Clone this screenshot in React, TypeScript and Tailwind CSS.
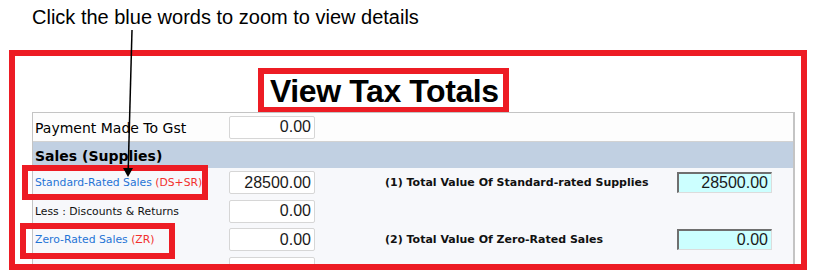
import type { ReactNode } from "react";

type SalesRow = {
  label: ReactNode;
  value: string;
  total?: { text: string; value: string };
  h: string;
};

const rows: SalesRow[] = [
  {
    label: (
      <>
        <span className="text-[#1f74d6]">Standard-Rated Sales </span>
        <span className="text-[#f2302e]">(DS+SR)</span>
      </>
    ),
    value: "28500.00",
    total: { text: "(1) Total Value Of Standard-rated Supplies", value: "28500.00" },
    h: "h-[29px]",
  },
  { label: "Less : Discounts & Returns", value: "0.00", h: "h-[28px]" },
  {
    label: (
      <>
        <span className="text-[#1f74d6]">Zero-Rated Sales </span>
        <span className="text-[#f2302e]">(ZR)</span>
      </>
    ),
    value: "0.00",
    total: { text: "(2) Total Value Of Zero-Rated Sales", value: "0.00" },
    h: "h-[29px]",
  },
  { label: "", value: "", h: "h-[28px]" },
];

function Field({ value }: { value: string }) {
  return (
    <div className="flex h-[23px] w-[86px] shrink-0 items-center justify-end rounded-[2px] border border-[#d6d6d6] bg-white pr-[3px] font-['Liberation_Sans',Arial,sans-serif] text-[16px] leading-none text-[#1a1a1a]">
      {value}
    </div>
  );
}

function TotalField({ value }: { value: string }) {
  return (
    <div className="flex h-[21px] w-[95px] shrink-0 items-center justify-end border-t-2 border-l-2 border-r border-b border-t-[#6f6f6f] border-l-[#6f6f6f] border-r-[#dcdcdc] border-b-[#dcdcdc] bg-[#ccffff] pr-[3px] font-['Liberation_Sans',Arial,sans-serif] text-[16px] leading-none text-[#1a1a1a]">
      {value}
    </div>
  );
}

export default function App() {
  return (
    <div className="relative h-[277px] w-[814px] overflow-hidden bg-white font-['DejaVu_Sans',sans-serif]">
      {/* caption */}
      <p className="pl-[32px] pt-[6px] font-['Liberation_Sans',Arial,sans-serif] text-[20px] leading-[23px] text-black">
        Click the blue words to zoom to view details
      </p>

      {/* outer red frame */}
      <div className="ml-[9px] mt-[21px] h-[220px] w-[798px] overflow-hidden border-[6px] border-[#ed1c24] bg-white">
        <div className="ml-[243px] mt-[12px] flex h-[45px] w-[251px] items-center whitespace-nowrap border-[6px] border-[#ed1c24] bg-white pl-[6px] pt-[2px] font-['Liberation_Sans',Arial,sans-serif] text-[32px] font-bold leading-[33px] tracking-[-0.4px] text-black">
          View Tax Totals
        </div>

        {/* form panel */}
        <div className="-mt-px ml-[17px] w-[763px] border-l border-t border-r-2 border-[#c4c4c4] bg-[#f7f8fb]">
          <div className="flex h-[29px] items-center border-b border-[#d2d2d2] bg-[#fdfdfd] pl-[2px]">
            <div className="w-[194px] shrink-0 pt-[2px] text-[14px] text-black">Payment Made To Gst</div>
            <Field value="0.00" />
          </div>
          <div className="flex h-[26px] items-center bg-[#c1d0e2] pl-[2px] pt-[3px] text-[14px] font-bold text-black">
            Sales (Supplies)
          </div>
          {rows.map((r, i) => (
            <div key={i} className={`flex items-center pl-[2px] ${r.h}`}>
              <div className="w-[194px] shrink-0 whitespace-nowrap pt-[2px] text-[10.8px] text-[#111]">{r.label}</div>
              <Field value={r.value} />
              {r.total && (
                <>
                  <div className="ml-[70px] w-[292px] shrink-0 whitespace-nowrap pt-[2px] text-[11px] font-bold text-[#111]">
                    {r.total.text}
                  </div>
                  <TotalField value={r.total.value} />
                </>
              )}
            </div>
          ))}
        </div>
      </div>

      {/* highlight boxes */}
      <div className="absolute left-[22px] top-[165px] h-[35px] w-[186px] border-[6px] border-[#ed1c24]" />
      <div className="absolute left-[20px] top-[223px] h-[36px] w-[155px] border-[6px] border-[#ed1c24]" />

      {/* pointer arrow */}
      <svg className="pointer-events-none absolute left-0 top-0" width="814" height="277">
        <line x1="132" y1="30" x2="128.2" y2="170" stroke="#000" strokeWidth="1.5" />
        <polygon points="123,168 133,168 128,177" fill="#000" />
      </svg>
    </div>
  );
}
